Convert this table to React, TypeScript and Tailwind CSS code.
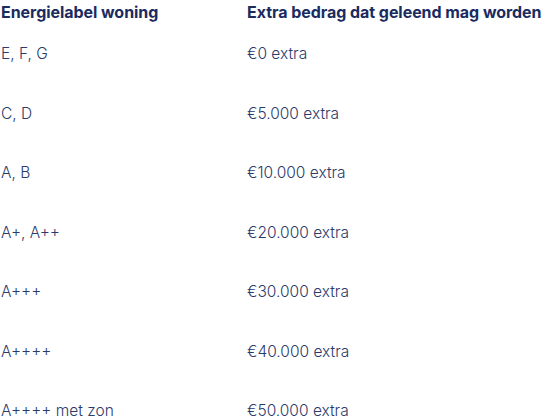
const ROWS = [
  { label: "E, F, G", amount: "€0 extra" },
  { label: "C, D", amount: "€5.000 extra" },
  { label: "A, B", amount: "€10.000 extra" },
  { label: "A+, A++", amount: "€20.000 extra" },
  { label: "A+++", amount: "€30.000 extra" },
  { label: "A++++", amount: "€40.000 extra" },
  { label: "A++++ met zon", amount: "€50.000 extra" },
];

const App = () => {
  return (
    <div className="w-[545px] h-[420px] overflow-hidden bg-white font-['Inter',sans-serif]">
      <div className="grid grid-cols-[247px_1fr] h-[24px] items-center text-[16px] font-bold text-[#1a2b5f] tracking-[-0.05px] whitespace-nowrap">
        <div className="pl-[1px]">Energielabel woning</div>
        <div>Extra bedrag dat geleend mag worden</div>
      </div>
      {ROWS.map((row, i) => (
        <div
          key={i}
          className="grid grid-cols-[247px_1fr] h-[59.5px] items-center text-[15.5px] font-light text-[#2b3a6b] whitespace-nowrap"
        >
          <div className="pl-[1px]">{row.label}</div>
          <div>{row.amount}</div>
        </div>
      ))}
    </div>
  );
};

export default App;
